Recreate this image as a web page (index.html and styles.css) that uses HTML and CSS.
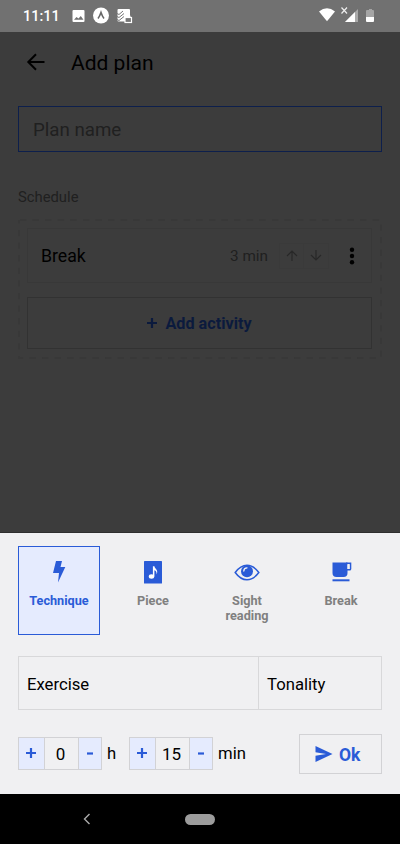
FILE: index.html
```html
<!DOCTYPE html>
<html lang="en">
<head>
<meta charset="utf-8">
<title>Add plan</title>
<link rel="stylesheet" href="styles.css">
</head>
<body>
<div class="phone">
  <div class="status">
    <span class="clock">11:11</span>
    <svg class="status-left" width="62" height="18" viewBox="0 0 62 18">
      <rect x="1.500" y="3" width="12" height="12" rx="1" fill="#fff"/>
      <path d="M3 12.800 5.500 10l2 1.500 2.300-2.500L12.500 12.800z" fill="#727272"/>
      <circle cx="30" cy="8.500" r="8" fill="#fff"/>
      <path d="M27 11.500Q28.600 9.500 30 5.500Q31.400 9.500 33 11.500" fill="none" stroke="#666" stroke-width="1.600"/>
      <rect x="46.500" y="2" width="12.500" height="12.500" rx="1" fill="#fff"/>
      <path d="M46 6.500l2 1 4-3.500M46 9.500l2 1 5-4M46 12.500l2 1 5-4" fill="none" stroke="#777" stroke-width="1"/>
      <rect x="54" y="10.500" width="6.500" height="5" fill="#777" stroke="#fff" stroke-width="1.200"/>
      <path d="M55.500 10V8.700h3.500V10" fill="none" stroke="#fff"/>
    </svg>
    <svg class="status-right" width="58" height="20" viewBox="0 0 58 20">
      <path d="M1 4.500Q9-2 17 4.500L9 14.300z" fill="#fff"/>
      <path d="M23.500 .5l5.500 6M29 .5l-5.500 6" stroke="#eee" stroke-width="1.200"/>
      <path d="M40 2v13H27z" fill="#aaa"/>
      <path d="M37 5v10H27z" fill="#fff"/>
      <path d="M49 3h2V2h3v1h1q1 0 1 1v6h-8V4q0-1 1-1z" fill="#a5a5a5"/>
      <path d="M48 10h8v4q0 1-1 1h-6q-1 0-1-1z" fill="#fff"/>
    </svg>
  </div>

  <main class="page">
    <header class="header">
      <svg width="20" height="20" viewBox="0 0 20 20"><path d="M18.500 10H2.500M10 2.200 2.300 10l7.700 7.800" fill="none" stroke="#000" stroke-width="2"/></svg>
      <h1 class="title">Add plan</h1>
    </header>
    <div class="name-input">Plan name</div>
    <div class="label">Schedule</div>
    <section class="schedule">
      <svg class="dashes" width="364" height="140" viewBox="0 0 364 140"><rect x="1" y="1" width="362" height="138" fill="none" stroke="#383838" stroke-width="2" stroke-dasharray="6.300 6.300" stroke-dashoffset="-1"/></svg>
      <div class="activity">
        <span class="activity-name">Break</span>
        <span class="duration">3 min</span>
        <span class="move"><svg width="12" height="12" viewBox="0 0 12 12"><path d="M6 11V1M1 6l5-5 5 5" fill="none" stroke="#282828" stroke-width="1.200"/></svg></span>
        <span class="move move-down"><svg width="12" height="12" viewBox="0 0 12 12"><path d="M6 0v10M1 5l5 5 5-5" fill="none" stroke="#282828" stroke-width="1.200"/></svg></span>
        <svg class="dots" width="6" height="18" viewBox="0 0 6 18"><circle cx="3" cy="2.800" r="2.200"/><circle cx="3" cy="9" r="2.200"/><circle cx="3" cy="15.200" r="2.200"/></svg>
      </div>
      <div class="add">
        <svg width="10" height="10" viewBox="0 0 10 10"><path d="M5 0v10M0 5h10" stroke="#0b1a3d" stroke-width="2.200"/></svg>
        <span>Add activity</span>
      </div>
    </section>
  </main>

  <section class="sheet">
    <div class="types">
      <div class="type selected">
        <svg class="type-icon" width="26" height="26" viewBox="0 0 26 26"><path d="M10 2h6l-1.500 6H19.300L12 23.500l1-9.500H7z" fill="#2a5bd7"/></svg>
        <span>Technique</span>
      </div>
      <div class="type">
        <svg class="type-icon" width="26" height="26" viewBox="0 0 26 26"><rect x="4" y="2" width="18" height="22.500" rx=".6" fill="#2a5bd7"/><ellipse cx="11.500" cy="17.500" rx="2.700" ry="2.200" fill="#fff"/><path d="M12.900 17.500V7.200h1.500q.2 1.500 1.800 3 1.900 2.300.3 5.300.5-3.500-2.100-4.200v6.200z" fill="#fff"/></svg>
        <span>Piece</span>
      </div>
      <div class="type">
        <svg class="type-icon" width="26" height="26" viewBox="0 0 26 26"><path d="M1.200 13.500Q6.500 6.200 13 6.200T24.800 13.500Q19.500 20.800 13 20.800T1.200 13.500z" fill="none" stroke="#2a5bd7" stroke-width="1.500"/><circle cx="13" cy="12.300" r="6" fill="#2a5bd7"/><path d="M9.800 12Q9.800 9 13 8.800" fill="none" stroke="#f0f0f2" stroke-width="1.300" stroke-linecap="round"/></svg>
        <span>Sight<br>reading</span>
      </div>
      <div class="type">
        <svg class="type-icon" width="26" height="26" viewBox="0 0 26 26"><path d="M4.500 3.500h15v10.500q0 4-4 4h-7q-4 0-4-4z" fill="#2a5bd7"/><path d="M18 4.300h4.500v5.700q0 .8-.8.8H18" fill="none" stroke="#2a5bd7" stroke-width="1.600"/><path d="M19.500 5.500h2v4.500h-2z" fill="#f0f0f2"/><path d="M4.500 21.300h17" stroke="#2a5bd7" stroke-width="2"/></svg>
        <span>Break</span>
      </div>
    </div>

    <div class="fields">
      <div class="field exercise">Exercise</div>
      <div class="field tonality">Tonality</div>
    </div>

    <div class="bottom">
      <div class="stepper">
        <span class="step plus"><svg width="10" height="10" viewBox="0 0 10 10"><path d="M5 0v10M0 5h10" stroke="#2a5bd7" stroke-width="2.200"/></svg></span>
        <span class="value">0</span>
        <span class="step minus"><svg width="6" height="10" viewBox="0 0 6 10"><path d="M0 5.500h6" stroke="#2a5bd7" stroke-width="2.200"/></svg></span>
      </div>
      <span class="unit unit-h">h</span>
      <div class="stepper">
        <span class="step plus"><svg width="10" height="10" viewBox="0 0 10 10"><path d="M5 0v10M0 5h10" stroke="#2a5bd7" stroke-width="2.200"/></svg></span>
        <span class="value">15</span>
        <span class="step minus"><svg width="6" height="10" viewBox="0 0 6 10"><path d="M0 5.500h6" stroke="#2a5bd7" stroke-width="2.200"/></svg></span>
      </div>
      <span class="unit">min</span>
      <div class="ok">
        <svg width="18" height="16" viewBox="0 0 18 16"><path d="M.5 0 17.500 8 .5 16V9.800L11 8 .5 6.200z" fill="#2a5bd7"/></svg>
        <span>Ok</span>
      </div>
    </div>
  </section>

  <nav class="navbar">
    <svg width="8" height="12" viewBox="0 0 8 12"><path d="M6.500 1 1.500 6l5 5" fill="none" stroke="#aaa" stroke-width="1.400"/></svg>
    <span class="pill"></span>
  </nav>
</div>
</body>
</html>
```
FILE: styles.css
```css
* { box-sizing: border-box; }

body {
  margin: 0;
  font-family: Roboto, "Liberation Sans", sans-serif;
  color: #000;
}

svg { display: block; flex: none; }

.phone {
  width: 400px;
  height: 844px;
  display: flex;
  flex-direction: column;
  overflow: hidden;
}

.status {
  height: 32px;
  background: #717171;
  color: #fff;
  display: flex;
  align-items: flex-start;
  padding: 7px 24px 0 23px;
}

.clock {
  width: 48px;
  font-size: 14.500px;
  line-height: 19px;
  font-weight: 500;
}

.status-right { margin-left: auto; }

.page {
  height: 501px;
  background: #3c3c3c;
  border-bottom: 1px solid #2e2e2e;
  padding: 0 18px;
}

.header {
  height: 74px;
  display: flex;
  align-items: center;
  gap: 25px;
  padding: 0 0 14px 8px;
}

.title {
  margin: 2px 0 0;
  font-size: 21px;
  line-height: 24px;
  font-weight: 400;
}

.name-input {
  height: 46px;
  border: 1px solid #0d1f4c;
  padding-left: 14px;
  font-size: 18.700px;
  line-height: 46px;
  color: #202020;
}

.label {
  margin-top: 35px;
  height: 32px;
  font-size: 14.800px;
  line-height: 20px;
  color: #202020;
}

.schedule {
  position: relative;
  height: 140px;
  padding: 9px 10px 9px 9px;
}

.dashes {
  position: absolute;
  inset: 0;
}

.activity {
  height: 55px;
  display: flex;
  align-items: center;
  border: 1px solid #383838;
  padding: 0 16px 0 13px;
  font-size: 17.700px;
}

.activity-name { flex: 1; }

.duration {
  font-size: 15.300px;
  color: #202020;
  margin-right: 11px;
}

.move {
  width: 25px;
  height: 26px;
  display: grid;
  place-items: center;
  border: 1px solid #3a3a3a;
}

.move-down { border-left: 0; }
.dots { margin-left: 20px; }

.add {
  margin-top: 14px;
  height: 52px;
  border: 1px solid #323232;
  display: flex;
  align-items: center;
  justify-content: center;
  gap: 8px;
  font-size: 16.200px;
  line-height: 20px;
  font-weight: 700;
  color: #0b1a3d;
}

.add span { padding-top: 2px; }

.sheet {
  height: 261px;
  background: #f0f0f2;
  padding: 13px 18px 0;
}

.types {
  display: grid;
  grid-template-columns: repeat(4, 82px);
  justify-content: space-between;
}

.type {
  height: 89px;
  display: flex;
  flex-direction: column;
  align-items: center;
  padding-top: 12px;
  border: 1px solid transparent;
  color: #808080;
  font-size: 12.700px;
  line-height: 15px;
  font-weight: 700;
  text-align: center;
}

.type-icon { margin-bottom: 8px; }

.selected {
  background: #e5ebfe;
  border-color: #2a5bd7;
  color: #2a5bd7;
}

.fields {
  margin-top: 21px;
  height: 54px;
  display: flex;
  border: 1px solid #d8d8da;
  font-size: 16.700px;
  line-height: 55px;
}

.field { padding-left: 8px; }
.exercise { width: 239px; }
.tonality { flex: 1; border-left: 1px solid #d8d8da; }

.bottom {
  margin-top: 23px;
  height: 41px;
  display: flex;
  align-items: center;
  font-size: 16.700px;
}

.stepper {
  width: 84px;
  height: 33px;
  display: flex;
  border: 1px solid #d2d2d5;
}

.step {
  background: #e5ebfe;
  display: grid;
  place-items: center;
  padding: 0 1px 2px 0;
}

.plus { width: 26px; border-right: 1px solid #d2d2d5; }
.minus { width: 23px; border-left: 1px solid #d2d2d5; }

.value {
  flex: 1;
  text-align: center;
  line-height: 33px;
  font-size: 17px;
  padding-right: 2px;
}

.unit { margin-left: 5px; line-height: 20px; padding-top: 1px; }
.unit-h { width: 22px; }

.ok {
  margin-left: auto;
  width: 83px;
  height: 40px;
  border: 1px solid #d2d2d5;
  display: flex;
  align-items: center;
  padding-left: 15px;
  gap: 6px;
  font-size: 17.500px;
  line-height: 22px;
  font-weight: 700;
  color: #2a5bd7;
}

.ok span { padding-top: 2px; }

.navbar {
  height: 50px;
  background: #000;
  display: flex;
  align-items: center;
  padding-left: 83px;
}

.pill {
  width: 30px;
  height: 11px;
  margin-left: 94px;
  border-radius: 6px;
  background: #9c9c9c;
}
```
